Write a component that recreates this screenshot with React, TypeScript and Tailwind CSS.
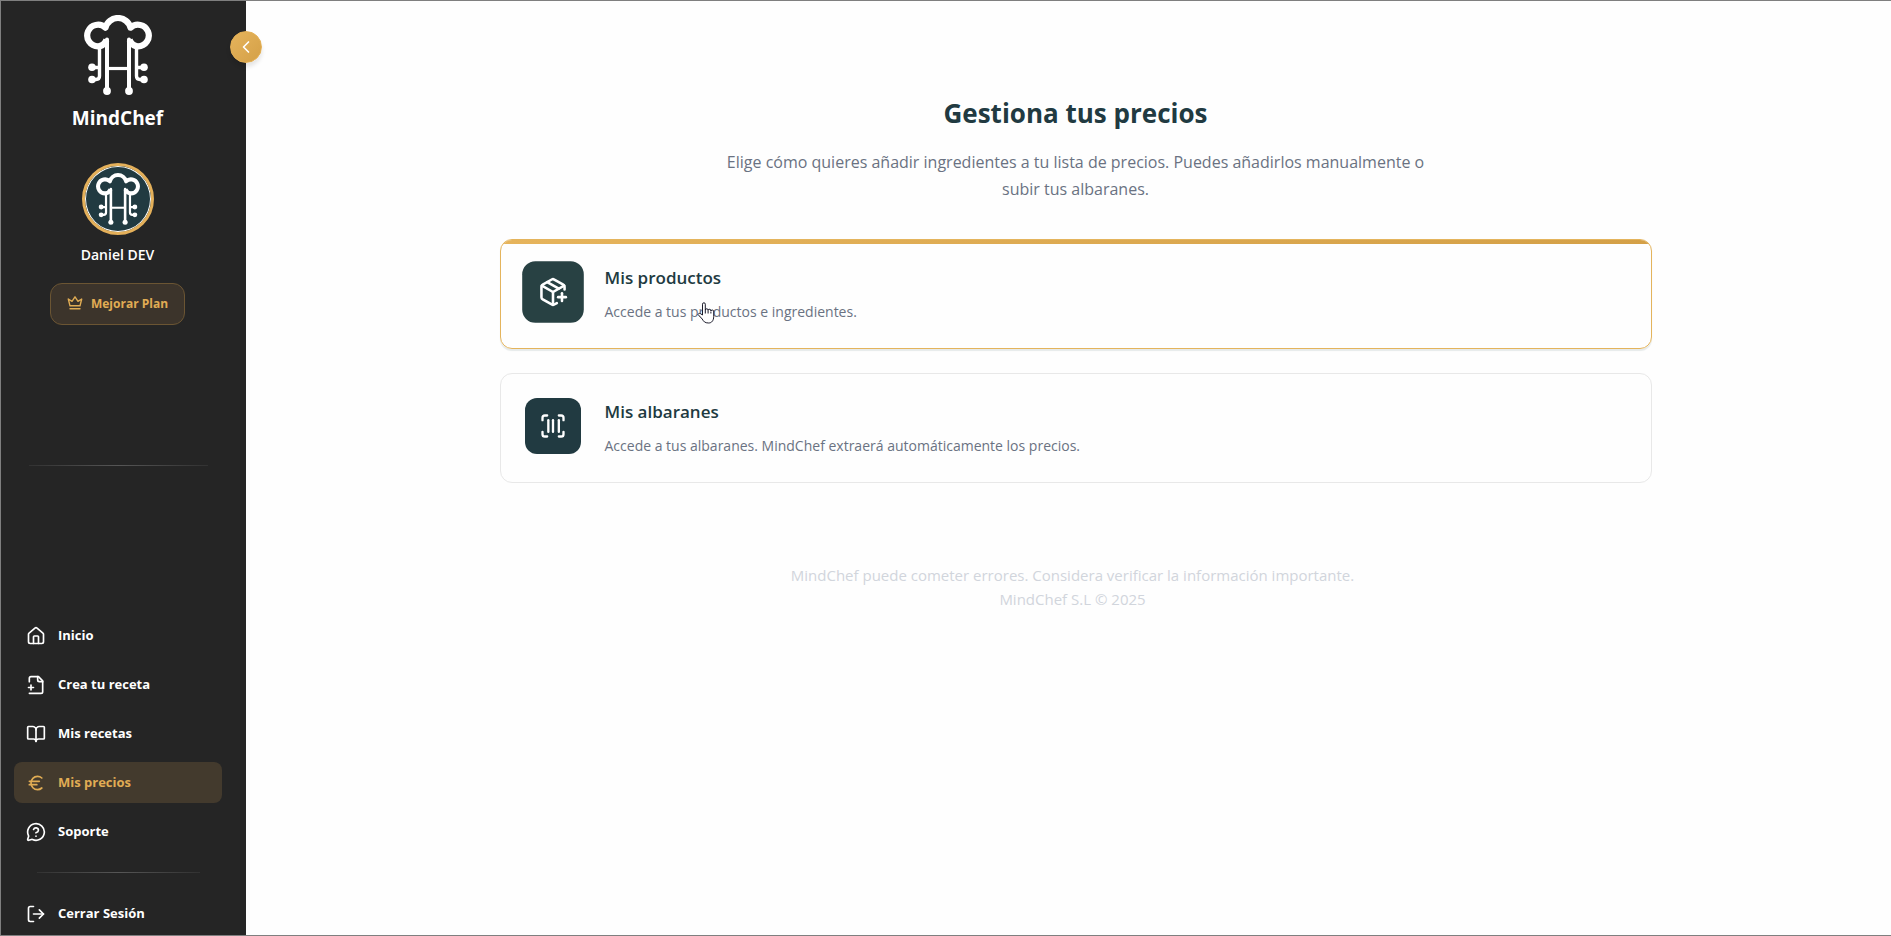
import { useState } from "react";
import type { ReactNode } from "react";
import {
  BookOpen,
  ChevronLeft,
  Euro,
  House,
  LogOut,
  MessageCircleQuestionMark,
  PackagePlus,
  ScanBarcode,
} from "lucide-react";

function Logo({ className }: { className?: string }) {
  return (
    <svg viewBox="0 0 68 80" fill="none" stroke="currentColor" className={className} aria-hidden="true">
      {/* Hat */}
      <path
        d="M22.5 25 C20.5 29 17.5 31.300 14 31.300 A10.800 10.800 0 1 1 21.500 12.700 A12.900 12.900 0 0 1 46.500 12.700 A10.800 10.800 0 1 1 54 31.300 C50.500 31.300 47.500 29 45.500 25"
        strokeWidth="6.2"
        strokeLinejoin="round"
      />
      {/* Circuit legs */}
      <path d="M23 24.5V76M45 24.5V76" strokeWidth="4" strokeLinecap="round" />
      <path d="M23 53.5H45" strokeWidth="3.2" />
      <path d="M15.5 31V61Q15.5 64.5 12 64.5H8M52.5 31V61Q52.5 64.5 56 64.5H60M8 52.5H15.5M60 52.5H52.5" strokeWidth="3.4" />
      <g fill="currentColor" stroke="none">
        <circle cx="8" cy="52.3" r="3.8" />
        <circle cx="8" cy="64.5" r="3.8" />
        <circle cx="60" cy="52.3" r="3.8" />
        <circle cx="60" cy="64.5" r="3.8" />
        <circle cx="23" cy="76" r="3.9" />
        <circle cx="45" cy="76" r="3.9" />
      </g>
    </svg>
  );
}

function CrownIcon() {
  return (
    <svg viewBox="0 0 16 16" fill="none" stroke="currentColor" strokeLinejoin="round" className="size-4" aria-hidden="true">
      <path d="M1.300 3 5 5.300 8 .8l3 4.500L14.700 3 13 9.800H3Z" strokeWidth="1.4" />
      <path d="M3 12.800h10" strokeWidth="1.4" strokeLinecap="round" />
    </svg>
  );
}

function FilePlusIcon({ className }: { className?: string }) {
  return (
    <svg
      viewBox="0 0 24 24"
      fill="none"
      stroke="currentColor"
      strokeWidth="2"
      strokeLinecap="round"
      strokeLinejoin="round"
      className={className}
      aria-hidden="true"
    >
      <path d="M4 22h14a2 2 0 0 0 2-2V7l-5-5H6a2 2 0 0 0-2 2v4" />
      <path d="M14 2v4a2 2 0 0 0 2 2h4" />
      <path d="M3 15h6M6 12v6" />
    </svg>
  );
}

function HandCursor() {
  return (
    <svg
      viewBox="0 0 18 22"
      fill="white"
      stroke="#1b1b2b"
      strokeLinejoin="round"
      className="pointer-events-none absolute left-[92px] top-0.5 h-[22px] w-[18px]"
      aria-hidden="true"
    >
      <path d="M5.5 13V2.2a1.4 1.4 0 0 1 2.8 0V8a1.4 1.4 0 0 1 2.8.4 1.4 1.4 0 0 1 2.8.6 1.4 1.4 0 0 1 2.8 1v4.5c0 4-2 6.500-5 6.500-4 0-5-1.500-6.500-4L1 12.500c.5-1.400 2-1.500 3-.5Z" />
      <path d="M8.300 8v3.500M11.100 8.500v3M13.900 9.500v2" />
    </svg>
  );
}

const navItems = [
  { label: "Inicio", icon: House },
  { label: "Crea tu receta", icon: FilePlusIcon },
  { label: "Mis recetas", icon: BookOpen },
  { label: "Mis precios", icon: Euro },
  { label: "Soporte", icon: MessageCircleQuestionMark },
];

function Divider({ className }: { className: string }) {
  return <div className={`h-px shrink-0 bg-linear-to-r from-[#323232] via-[#565656] to-[#323232] ${className}`} />;
}

function Sidebar() {
  const [active, setActive] = useState("Mis precios");

  return (
    <aside className="relative flex w-[245px] shrink-0 flex-col bg-[#252525] pb-px text-white">
      <button
        aria-label="Contraer menú"
        className="absolute -right-4 top-[30px] flex size-8 items-center justify-center rounded-full border border-[#e4b055] bg-linear-to-br from-[#e6b45c] to-[#d4a047] shadow-[0_4px_4px_rgba(0,0,0,0.1)]"
      >
        <ChevronLeft className="size-5" />
      </button>

      <div className="flex flex-col items-center pr-3 pt-3.5">
        <Logo className="h-20 w-[68px]" />
        <p className="mt-2 text-[19px] font-bold leading-[30px]">MindChef</p>

        {/* Profile */}
        <div className="mt-[30px] flex size-[72px] items-center justify-center rounded-full border-3 border-[#e4b05a] bg-[#213a41] ring-1 ring-inset ring-white">
          <Logo className="h-[52px] w-11" />
        </div>
        <p className="mt-2 text-sm font-semibold leading-6">Daniel DEV</p>
        <button className="mt-4 flex h-[42px] items-center gap-2 rounded-xl border border-[#6b5533] bg-[#3c342b] px-4 text-[12px] font-bold text-[#e0ac54]">
          <CrownIcon />
          Mejorar Plan
        </button>
      </div>

      <Divider className="my-auto ml-7 mr-[38px]" />

      <nav className="flex flex-col gap-2 pl-[13px] pr-6 pt-2.5">
        {navItems.map(({ label, icon: Icon }) => (
          <a
            key={label}
            href="#"
            onClick={() => setActive(label)}
            className={`flex h-[41px] items-center gap-3 rounded-lg px-3 text-[13px] font-bold ${
              active === label ? "bg-[#433a2d] text-[#e0ac54]" : "text-white"
            }`}
          >
            <Icon className="size-5" />
            {label}
          </a>
        ))}
      </nav>

      <Divider className="mb-5 ml-9 mr-[46px] mt-5" />
      <button className="ml-[13px] mr-6 flex h-[41px] items-center gap-3 px-3 text-[13px] font-bold">
        <LogOut className="size-5" />
        Cerrar Sesión
      </button>
    </aside>
  );
}

type OptionCardProps = {
  title: string;
  description: string;
  icon: ReactNode;
  highlighted?: boolean;
  children?: ReactNode;
};

function OptionCard({ title, description, icon, highlighted, children }: OptionCardProps) {
  return (
    <a
      href="#"
      className={`relative flex gap-6 overflow-hidden rounded-xl border p-6 ${
        highlighted ? "border-[#e4b45c]" : "border-[#e8e8e8]"
      }`}
    >
      {highlighted && <div className="absolute inset-x-0 top-0 h-1 bg-linear-to-r from-[#e6b45c] to-[#d4a047]" />}
      <div
        className={`flex size-14 shrink-0 items-center justify-center rounded-xl text-white ${
          highlighted ? "scale-110 bg-[#284143]" : "bg-[#213a41]"
        }`}
      >
        {icon}
      </div>
      <div className="flex flex-col gap-2">
        <h2 className="text-[17px] font-semibold leading-7 text-[#213a41]">{title}</h2>
        <p className="relative text-sm leading-6 text-gray-500">
          {description}
          {children}
        </p>
      </div>
    </a>
  );
}

export default function App() {
  return (
    <div className="flex min-h-screen border-y border-l border-[#7f7f7f] bg-[#fefefe] font-['Open_Sans','Noto_Sans',sans-serif]">
      <Sidebar />
      <div className="flex-1">
        <main className="pl-3.5 pt-24">
          <header className="mx-auto max-w-[700px] text-center">
            <h1 className="text-[26px] font-bold leading-8 text-[#213a41]">Gestiona tus precios</h1>
            <p className="mt-5 text-base leading-[27px] text-gray-500">
              Elige cómo quieres añadir ingredientes a tu lista de precios. Puedes añadirlos manualmente o subir tus
              albaranes.
            </p>
          </header>

          <section className="mx-auto mt-9 flex max-w-6xl flex-col gap-6">
            <div className="rounded-xl shadow-[0_2px_1px_#e6eaea]">
              <OptionCard
                title="Mis productos"
                description="Accede a tus productos e ingredientes."
                icon={<PackagePlus className="size-7" />}
                highlighted
              >
                <HandCursor />
              </OptionCard>
            </div>
            <OptionCard
              title="Mis albaranes"
              description="Accede a tus albaranes. MindChef extraerá automáticamente los precios."
              icon={<ScanBarcode className="size-7" />}
            />
          </section>
        </main>

        <footer className="mt-20 pl-2 text-center text-[15px] leading-6 text-gray-300">
          <p>MindChef puede cometer errores. Considera verificar la información importante.</p>
          <p>MindChef S.L © 2025</p>
        </footer>
      </div>
    </div>
  );
}
